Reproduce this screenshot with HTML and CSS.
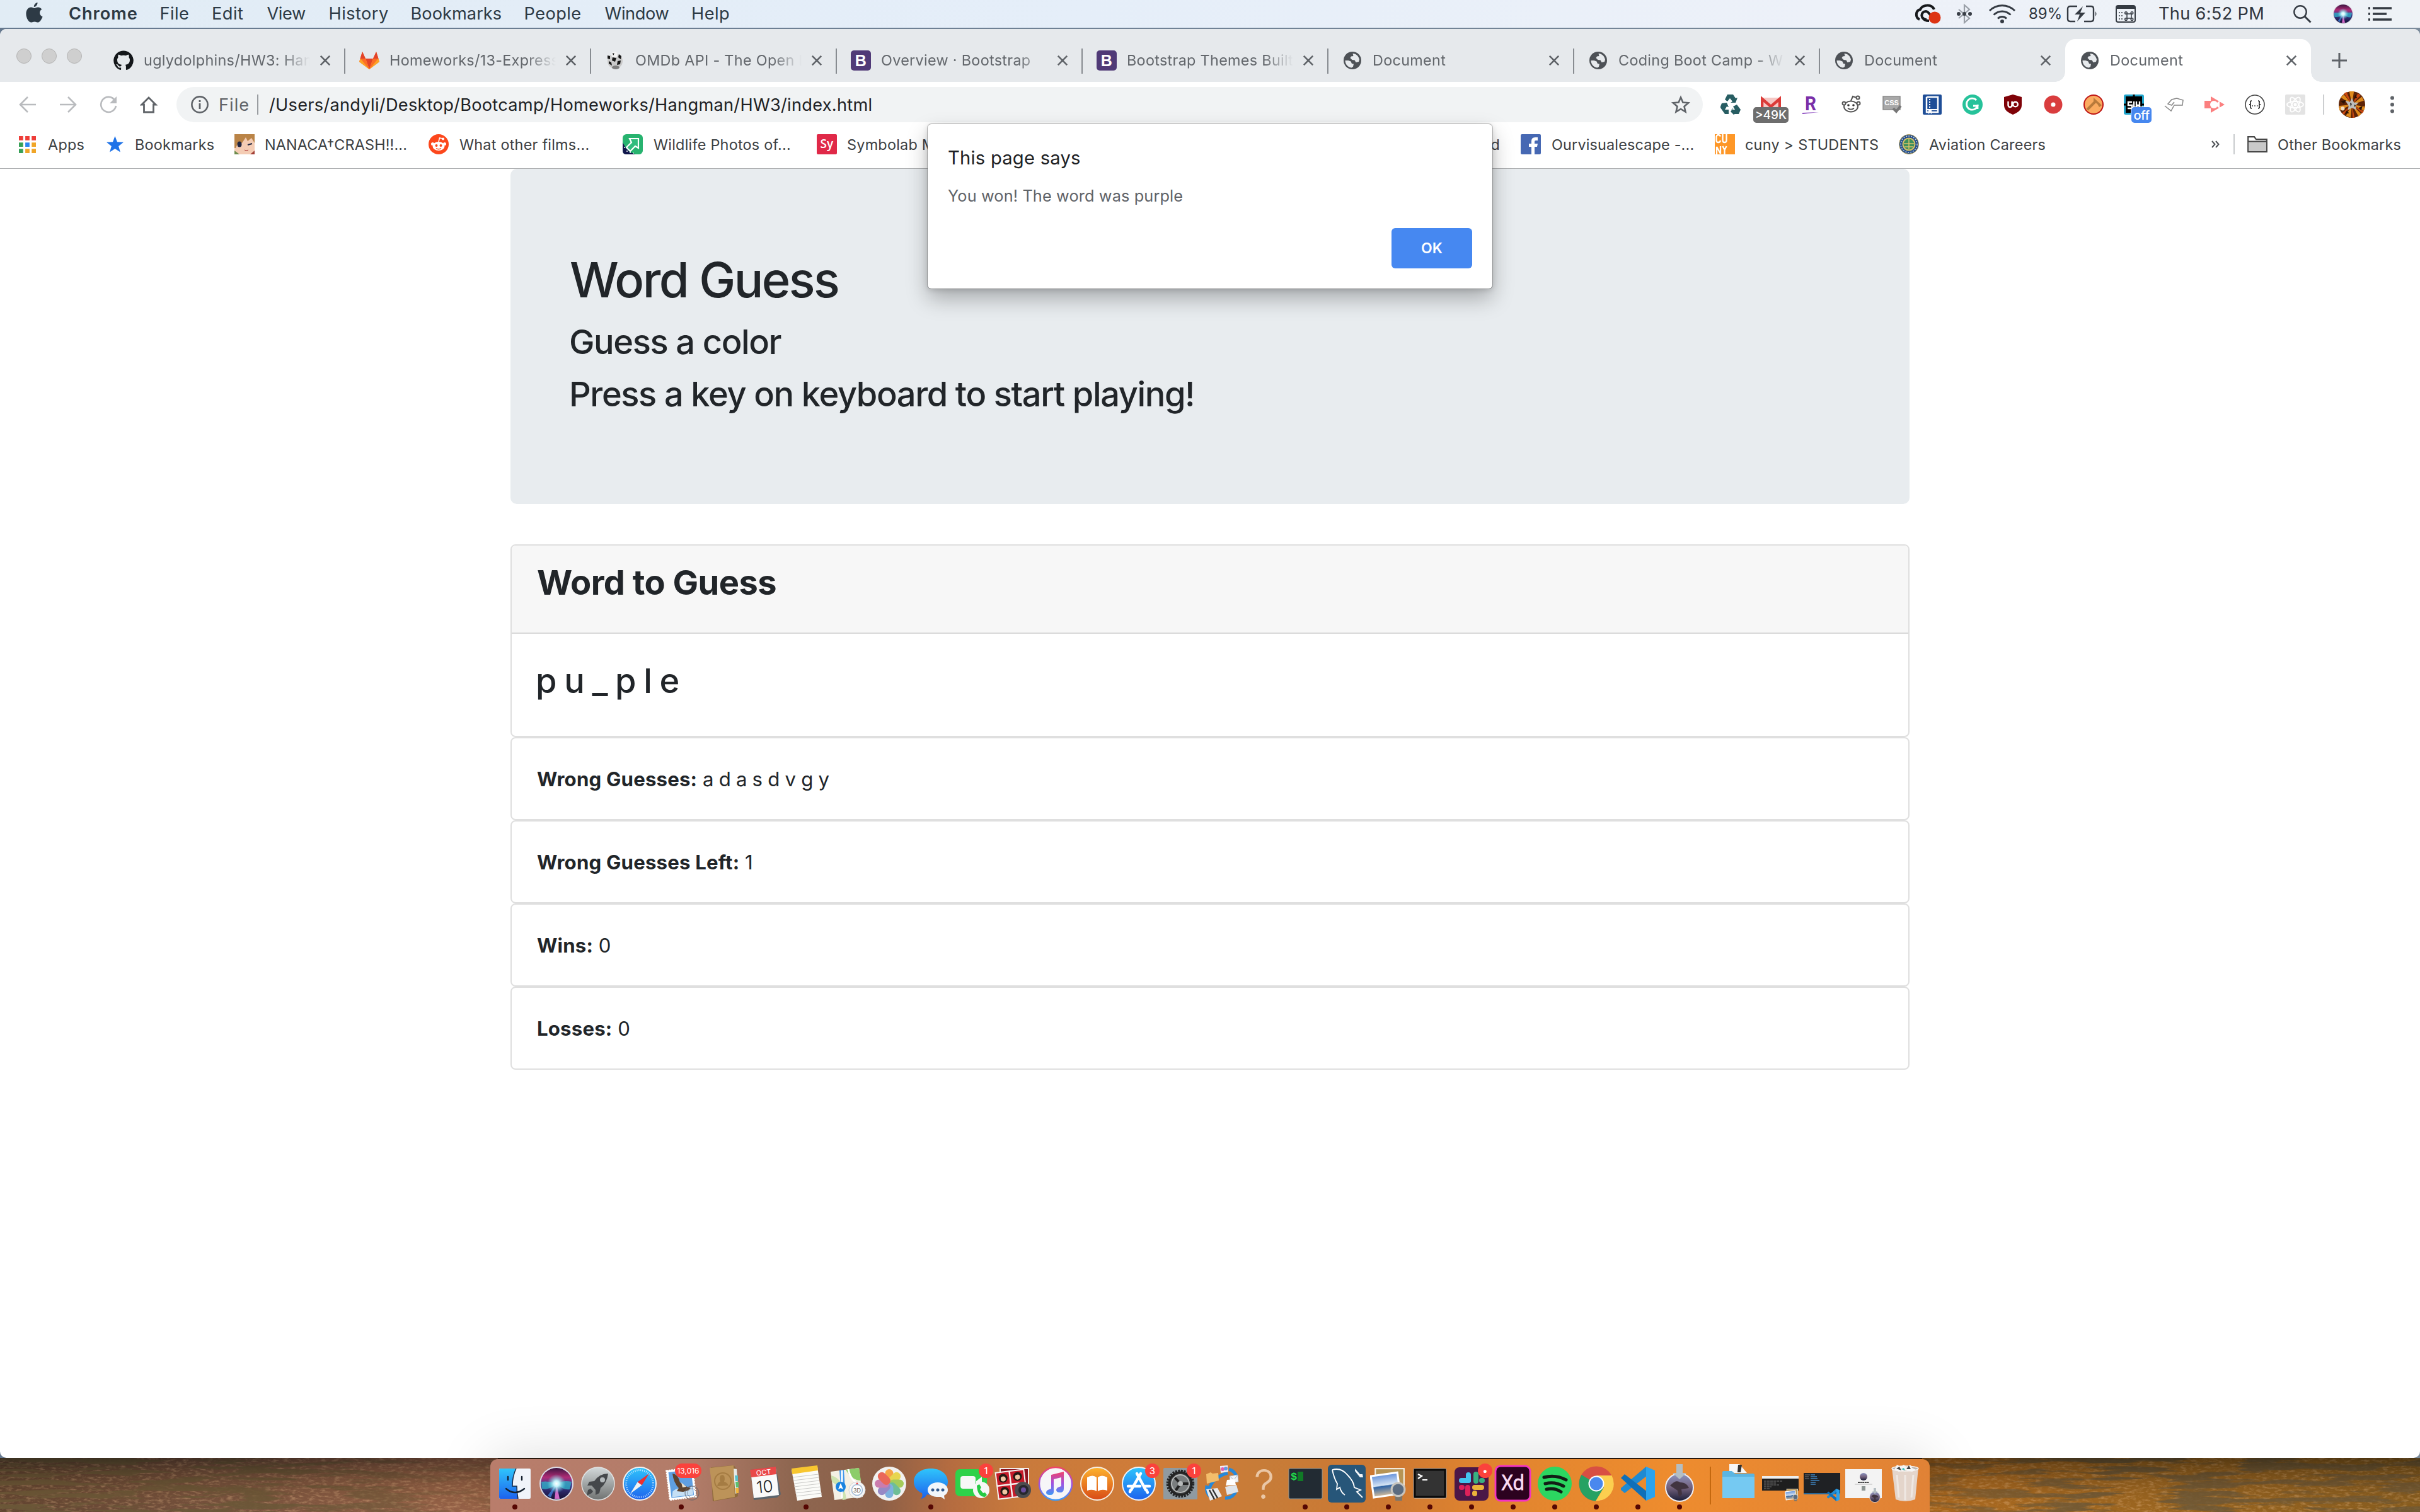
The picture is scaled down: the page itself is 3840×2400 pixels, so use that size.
FILE: index.html
```
<!DOCTYPE html>
<html lang="en">
<head>
<meta charset="utf-8">
<title>Document</title>
<link rel="stylesheet" href="styles.css">
</head>
<body>
<svg class="defs" width="0" height="0" aria-hidden="true">
  <defs>
    <symbol id="globe" viewBox="0 0 28 28"><circle cx="14" cy="14" r="14" fill="#4d5156"/><path d="M2.500 14h5l4 1.500 1.500 3.500 3 .5-1 4.500-2.500 1.500C7 25 2.500 20 2.500 14z" fill="#e7eaed"/><path d="M14.500 3c5 0 9.500 4 10.500 9.500l-1 3.500-4.500 1-2-3.500-4-.5-3-3 1.500-2.500 3.500-.5z" fill="#e7eaed"/></symbol>
    <symbol id="close" viewBox="0 0 16 16"><path d="M.8 .8l14.400 14.400M15.200 .8L.8 15.200" stroke="#5f6368" stroke-width="2.600"/></symbol>
    <symbol id="bootstrap" viewBox="0 0 32 32"><rect width="32" height="32" rx="5" fill="#503a77"/><text x="16" y="25" text-anchor="middle" font-family="Liberation Sans, sans-serif" font-weight="700" font-size="25" fill="#fff">B</text></symbol>
    <linearGradient id="blueV" x2="0" y2="1"><stop stop-color="#2fc5fb"/><stop offset="1" stop-color="#1d62ee"/></linearGradient>
    <linearGradient id="silver" x2="0" y2="1"><stop stop-color="#d3d9da"/><stop offset="1" stop-color="#6f7271"/></linearGradient>
    <linearGradient id="orangeV" x2="0" y2="1"><stop stop-color="#fdb32e"/><stop offset="1" stop-color="#d84a17"/></linearGradient>
    <linearGradient id="sea" x2="0" y2="1"><stop stop-color="#6c97dc"/><stop offset=".5" stop-color="#d5e4f3"/><stop offset=".55" stop-color="#2f64a5"/><stop offset="1" stop-color="#c9b69b"/></linearGradient>
    <linearGradient id="note" x2="0" y2="1"><stop stop-color="#f0436a"/><stop offset=".5" stop-color="#a14fe0"/><stop offset="1" stop-color="#3d9af5"/></linearGradient>
    <linearGradient id="island" x2="0" y2="1"><stop stop-color="#8b93c0"/><stop offset=".5" stop-color="#75637e"/><stop offset="1" stop-color="#191c36"/></linearGradient>
    <radialGradient id="siriCore"><stop stop-color="#fff"/><stop offset=".3" stop-color="#c4f4fa"/><stop offset="1" stop-color="#5ad7e2" stop-opacity="0"/></radialGradient>
    <linearGradient id="siriBall" x2="0" y2="1"><stop stop-color="#3a1540"/><stop offset=".3" stop-color="#b02b76"/><stop offset=".55" stop-color="#3c3a8e"/><stop offset="1" stop-color="#140f33"/></linearGradient>
    <symbol id="siriIcon" viewBox="0 0 54 54"><circle cx="27" cy="27" r="27" fill="#dcdce6"/><circle cx="27" cy="27" r="25" fill="url(#siriBall)"/><path d="M3 24q12-2 24 3-11 11-23 8zM51 24q-12-3-24 3 11 11 21 9z" fill="#2fb4c8" opacity=".75"/><path d="M27 27L24 51h8z" fill="#d069c6"/><path d="M27 27L13 46l5 3z" fill="#3f7fd8" opacity=".8"/><circle cx="27" cy="27" r="15" fill="url(#siriCore)"/></symbol>
    <symbol id="vscode" viewBox="0 0 54 54"><path d="M40 0L0 34v3l6 5L42 14z" fill="#1f8ad2"/><path d="M0 18l6-6L42 40l-2 14z" fill="#0f6fb8"/><path d="M40 0l14 6v42l-14 6z" fill="#2ba3ee"/></symbol>
    <symbol id="preview" viewBox="0 0 56 50"><rect x="8" y="1" width="44" height="30" fill="#b69455" stroke="#f5f1e6" stroke-width="2"/><g transform="rotate(-8 24 28)"><rect x="2" y="8" width="44" height="36" fill="#fff"/><rect x="5" y="11" width="38" height="30" fill="url(#sea)"/></g><path d="M37 38h13l-1 12H39z" fill="#7c766c"/><circle cx="43" cy="33" r="10" fill="#5b6c80" stroke="#c7c4bd" stroke-width="3"/></symbol>
    <symbol id="installer" viewBox="0 0 46 60"><circle cx="23" cy="37" r="22" fill="url(#island)" stroke="#efeef4" stroke-width="2"/><path d="M8 34c8-8 12-8 16-5 8 0 12 4 14 9l-12 2 1 8-5 4-2-10z" fill="#413440"/><path d="M18 0h10v14h6L23 24 12 14h6z" fill="#b4bec3"/></symbol>
    <filter id="grain" x="0" y="0" width="100%" height="100%"><feTurbulence type="fractalNoise" baseFrequency=".009 .11" numOctaves="4" seed="8"/><feColorMatrix values="0 0 0 0 .1  0 0 0 0 .08  0 0 0 0 .04  8 0 0 0 -3.700"/></filter>
    <filter id="speck" x="0" y="0" width="100%" height="100%"><feTurbulence type="fractalNoise" baseFrequency=".1 .3" numOctaves="3" seed="3"/><feColorMatrix values="0 0 0 0 .9  0 0 0 0 .6  0 0 0 0 .35  3 0 0 0 -1.400"/></filter>
    <linearGradient id="woodTone"><stop stop-color="#4e3a30"/><stop offset=".1" stop-color="#694b40"/><stop offset=".2" stop-color="#8f5e4b"/><stop offset=".5" stop-color="#6b4520"/><stop offset=".8" stop-color="#a5651b"/><stop offset=".88" stop-color="#93611c"/><stop offset="1" stop-color="#7a561a"/></linearGradient>
    <linearGradient id="woodDark"><stop stop-color="#fff"/><stop offset=".12" stop-color="#ddd"/><stop offset=".19" stop-color="#444"/><stop offset=".21" stop-color="#333"/><stop offset=".8" stop-color="#777"/><stop offset=".87" stop-color="#ddd"/><stop offset="1" stop-color="#bbb"/></linearGradient>
    <linearGradient id="woodShade" x2="0" y2="1"><stop stop-color="#150c04" stop-opacity=".45"/><stop offset="1" stop-color="#e08a3a" stop-opacity=".12"/></linearGradient>
    <mask id="woodMask"><rect width="3840" height="86" fill="url(#woodDark)"/></mask>
  </defs>
</svg>

<div class="desktop">
  <header class="menubar">
    <nav class="menus">
      <svg class="apple" viewBox="0 0 27 32"><path d="M18.500 0c.3 3.500-2.500 7-5.600 7C12.500 3.700 15.500.5 18.500 0zM13.600 9c1.500 0 3-1.600 5.700-1.600 2.600 0 4.800 1.300 6.100 3.400-5 3-4 9.800 1.200 11.700C25 27 22 31.600 19 31.600c-2 0-2.800-1.200-5.200-1.200s-3.400 1.200-5.200 1.200C4.500 31.600.4 24.500.4 18 .4 11.300 4.300 7.500 8.200 7.500c2.400 0 4.200 1.500 5.400 1.500z" fill="#2d3a45"/></svg>
      <span class="app-name">Chrome</span><span>File</span><span>Edit</span><span class="tight">View</span><span>History</span><span class="snug">Bookmarks</span><span>People</span><span class="tight">Window</span><span>Help</span>
    </nav>
    <div class="status">
      <svg width="44" height="32" viewBox="0 0 44 32"><path d="M9 25C2 22 2 11 10 9 14 1 28 0 32 9" fill="none" stroke="#17191c" stroke-width="4"/><path d="M20 25C10 25 10 12 19 12c6 0 8 12 14 12" fill="none" stroke="#17191c" stroke-width="4"/><path d="M14 22c2 4 6 5 10 5" fill="none" stroke="#17191c" stroke-width="4"/><circle cx="33" cy="22" r="9.500" fill="#dd3414"/></svg>
      <svg width="26" height="32" viewBox="0 0 26 32"><path d="M4 9l17 14-8 7V2l8 7L4 23" fill="none" stroke="#9aa0a8" stroke-width="2.200"/><circle cx="4" cy="16" r="3" fill="#3a3f47"/><circle cx="13" cy="16" r="3" fill="#3a3f47"/><circle cx="22" cy="16" r="3" fill="#3a3f47"/></svg>
      <svg width="44" height="32" viewBox="0 0 44 32"><g fill="none" stroke="#353b43" stroke-width="3"><path d="M2 11c11-11 29-11 40 0M8.500 17.500c8-7.500 19-7.500 27 0M15 23.500c4-4 10-4 14 0"/></g><circle cx="22" cy="28" r="3" fill="#353b43"/></svg>
      <span class="percent">89%</span>
      <svg width="50" height="28" viewBox="0 0 50 28"><path d="M17 2H6Q2 2 2 6v16q0 4 4 4h8M31 2h8q4 0 4 4v16q0 4-4 4H28" fill="none" stroke="#353b43" stroke-width="2.400"/><path d="M26 2L13 15h8l-4 11 13-14h-8z" fill="#353b43"/><path d="M46 10q3 4 0 8z" fill="#353b43"/></svg>
      <svg width="32" height="28" viewBox="0 0 32 28"><rect x="1" y="1" width="30" height="26" rx="3" fill="none" stroke="#353b43" stroke-width="2"/><path d="M1 1h30v5H1z" fill="#353b43"/><path d="M5 12h2M5 17h2M5 22h2M9 12h2M9 17h2M9 22h2" stroke="#353b43" stroke-width="1.500"/><g fill="none" stroke="#353b43" stroke-width="1.500"><path d="M18 14h7v7h-7z"/><circle cx="16.500" cy="12.500" r="1.800"/><circle cx="26" cy="12.500" r="1.800"/><circle cx="16.500" cy="22.500" r="1.800"/><circle cx="26" cy="22.500" r="1.800"/></g></svg>
      <span>Thu 6:52 PM</span>
      <svg width="30" height="30" viewBox="0 0 30 30"><circle cx="12" cy="12" r="9.700" fill="none" stroke="#353b43" stroke-width="2.400"/><path d="M19 19l9.500 9.500" stroke="#353b43" stroke-width="3"/></svg>
      <svg width="32" height="32"><use href="#siriIcon"/></svg>
      <svg width="38" height="22" viewBox="0 0 38 22"><path d="M8 2h30M8 11h22M8 20h30M1 2h3M1 11h3M1 20h3" stroke="#353b43" stroke-width="3.600"/></svg>
    </div>
  </header>

  <section class="window">
    <div class="tabstrip">
      <div class="lights"><i></i><i></i><i></i></div>
      <div class="tab"><svg class="fav" viewBox="0 0 32 32"><path d="M16 .5a15.700 15.700 0 0 0-5 30.600c.8.1 1.100-.3 1.100-.8v-3c-4.400 1-5.300-1.900-5.300-1.900-.7-1.800-1.700-2.300-1.700-2.300-1.400-1 .1-1 .1-1 1.600.1 2.400 1.600 2.400 1.600 1.400 2.400 3.700 1.700 4.600 1.300.1-1 .5-1.700 1-2.100-3.500-.4-7.200-1.700-7.200-7.800 0-1.700.6-3.100 1.600-4.200-.2-.4-.7-2 .2-4.200 0 0 1.300-.4 4.300 1.600a15 15 0 0 1 7.800 0c3-2 4.300-1.600 4.300-1.600.9 2.200.3 3.800.2 4.200 1 1.100 1.600 2.500 1.600 4.200 0 6.100-3.700 7.400-7.200 7.800.6.500 1.100 1.500 1.100 2.900v4.500c0 .5.300.9 1.100.8A15.700 15.700 0 0 0 16 .5z" fill="#14171a"/></svg><span class="tab-title">uglydolphins/HW3: Han</span><svg class="x"><use href="#close"/></svg></div>
      <div class="tab"><svg class="fav" viewBox="0 0 32 32"><path d="M16 30L0 18 5 2l5 11h12l5-11 5 16z" fill="#fc6d26"/><path d="M16 30L10 13h12z" fill="#e24329"/><path d="M16 30L10 13H2L0 18zM16 30l6-17h8l2 5z" fill="#fca326"/><path d="M16 30L10 13H2zM16 30l6-17h8z" fill="#fc6d26"/><path d="M10 13L5 2 1.500 13zM22 13l5-11 3.500 11z" fill="#e24329"/></svg><span class="tab-title">Homeworks/13-Express</span><svg class="x"><use href="#close"/></svg></div>
      <div class="tab"><svg class="fav" viewBox="0 0 32 32"><circle cx="16" cy="17" r="12" fill="#c9c9c9"/><circle cx="15" cy="7" r="5" fill="#f3f3f3"/><path d="M4 8l4 1v5l-4-1zM12 11l6 1-2 6-5-2zM22 6l4 3-1 5-4-3zM6 17l4 2 1 5-5-3zM20 17l5-1-1 6-5 1zM12 4l3 1-2 3z" fill="#161616"/><ellipse cx="17" cy="27" rx="6" ry="3" fill="#7d7d7d"/></svg><span class="tab-title">OMDb API - The Open M</span><svg class="x"><use href="#close"/></svg></div>
      <div class="tab"><svg class="fav"><use href="#bootstrap"/></svg><span class="tab-title">Overview · Bootstrap</span><svg class="x"><use href="#close"/></svg></div>
      <div class="tab"><svg class="fav"><use href="#bootstrap"/></svg><span class="tab-title">Bootstrap Themes Built</span><svg class="x"><use href="#close"/></svg></div>
      <div class="tab"><svg class="fav small"><use href="#globe"/></svg><span class="tab-title">Document</span><svg class="x"><use href="#close"/></svg></div>
      <div class="tab"><svg class="fav small"><use href="#globe"/></svg><span class="tab-title">Coding Boot Camp - W</span><svg class="x"><use href="#close"/></svg></div>
      <div class="tab last"><svg class="fav small"><use href="#globe"/></svg><span class="tab-title">Document</span><svg class="x"><use href="#close"/></svg></div>
      <div class="tab active"><svg class="fav small"><use href="#globe"/></svg><span class="tab-title">Document</span><svg class="x"><use href="#close"/></svg></div>
      <svg class="plus" viewBox="0 0 24 24"><path d="M12 0v24M0 12h24" stroke="#5f6368" stroke-width="3"/></svg>
    </div>

    <div class="toolbar">
      <div class="nav-buttons">
        <svg viewBox="0 0 28 28"><path d="M27 14H3M14 2L2 14l12 12" fill="none" stroke="#b9bbbe" stroke-width="2.600"/></svg>
        <svg viewBox="0 0 28 28"><path d="M1 14h24M14 2l12 12-12 12" fill="none" stroke="#b9bbbe" stroke-width="2.600"/></svg>
        <svg viewBox="0 0 28 28"><path d="M24 7a12 12 0 1 0 2 9" fill="none" stroke="#b9bbbe" stroke-width="2.600"/><path d="M27 1v11H16z" fill="#b9bbbe"/></svg>
        <svg viewBox="0 0 28 28"><path d="M14 3L3 14h3.500v12h15V14H25z" fill="none" stroke="#5f6368" stroke-width="2.800"/></svg>
      </div>
      <div class="omnibox">
        <svg class="info" viewBox="0 0 28 28"><circle cx="14" cy="14" r="12.600" fill="none" stroke="#5f6368" stroke-width="2.600"/><path d="M14 12v9M14 7v3" stroke="#5f6368" stroke-width="2.800"/></svg>
        <span class="scheme">File</span><span class="rule"></span>
        <span class="url">/Users/andyli/Desktop/Bootcamp/Homeworks/Hangman/HW3/index.html</span>
        <svg class="star" viewBox="0 0 30 30"><path d="M15 3.500l3.400 8 8.600.8-6.500 5.700 2 8.500L15 22l-7.500 4.500 2-8.500L3 12.300l8.600-.8z" fill="none" stroke="#5f6368" stroke-width="2.600"/></svg>
      </div>
      <div class="extensions">
        <svg viewBox="0 0 32 32"><g fill="#275d62"><path d="M7 8l4-8h9l4 6 3-1-3 8h-8l3-2-4-5-4 5z"/><path d="M0 19l2-5 8-1 3 7-3-1-3 5h6v7H7L0 21z"/><path d="M17 24h6l-3-5 6-3 6 8-3 7h-7v2l-6-6 5-6z"/></g></svg>
        <div class="ext"><svg viewBox="0 0 32 32"><path d="M0 5h32v22H0z" fill="#f5c8c5"/><path d="M2 27V7l14 12L30 7v20" fill="none" stroke="#dc3b38" stroke-width="4.500"/></svg><span class="badge gray">&gt;49K</span></div>
        <svg viewBox="0 0 32 32"><text x="6" y="25" font-family="Roboto, sans-serif" font-weight="700" font-size="32" textLength="18" lengthAdjust="spacingAndGlyphs" fill="#7a2fa8">R</text><path d="M2 31V29l26-1z" fill="#8540bd"/></svg>
        <svg viewBox="0 0 32 32"><g fill="#fff" stroke="#555" stroke-width="2"><ellipse cx="15" cy="19" rx="11" ry="8.500"/><circle cx="4" cy="14" r="2.500"/><circle cx="27" cy="14" r="2.500"/><path d="M15 10l3-7 6 2"/><circle cx="26" cy="5" r="2.500"/></g><circle cx="11" cy="17" r="1.800" fill="#333"/><circle cx="19" cy="17" r="1.800" fill="#333"/><path d="M10 22q5 3 10 0" stroke="#444" fill="none" stroke-width="1.500"/></svg>
        <svg viewBox="0 0 32 32"><rect x="2" y="3" width="27" height="21" fill="#a8a8a8" stroke="#8a8a8a" stroke-width="1.500"/><text x="15.500" y="17" text-anchor="middle" font-family="Liberation Sans, sans-serif" font-weight="700" font-size="11" fill="#fff">CSS</text><path d="M18 22l5 5 7-9" stroke="#777" stroke-width="4" fill="none"/></svg>
        <svg viewBox="0 0 32 32"><rect x="1" width="30" height="32" rx="2" fill="#1f4e97"/><path d="M7 4h18v24H15M7 4v24h3" fill="none" stroke="#fff" stroke-width="2.500"/><path d="M12 7v14" stroke="#fff" stroke-width="2" stroke-dasharray="2 2"/><path d="M6 24h20" stroke="#fff" stroke-width="2"/><path d="M10 25h5v6l-2.500-2-2.500 2z" fill="#fff"/></svg>
        <svg viewBox="0 0 32 32"><circle cx="16" cy="16" r="16" fill="#26c29a"/><path d="M22 9a9 9 0 1 0 2 9h-7m7-2v7" fill="none" stroke="#fff" stroke-width="2.800"/></svg>
        <svg viewBox="0 0 32 32"><path d="M16 0l14 4v13c0 8-7 12-14 15C9 29 2 25 2 17V4z" fill="#7f0208"/><path d="M8.500 11v6a3 3 0 0 0 6 0v-6M15 11v8" fill="none" stroke="#fff" stroke-width="2.400"/><circle cx="20" cy="15.500" r="3.800" fill="none" stroke="#fff" stroke-width="2.400"/></svg>
        <svg viewBox="0 0 32 32"><circle cx="16" cy="16" r="14.500" fill="#d93d3e"/><circle cx="16" cy="16" r="3.500" fill="#fff"/></svg>
        <svg viewBox="0 0 32 32"><circle cx="16" cy="16" r="15" fill="#fbab60" stroke="#be1414" stroke-width="2"/><path d="M6 24L19 11" stroke="#b97a3b" stroke-width="4"/><path d="M16 5l13 12-4 3-3-5-6-4z" fill="#b97a3b"/></svg>
        <div class="ext"><svg viewBox="0 0 32 32"><rect width="32" height="32" rx="3" fill="#20a5cc"/><rect x="3" y="3" width="26" height="26" fill="#000"/><path d="M16 0v4M0 16h4M28 16h4" stroke="#000" stroke-width="3"/><path d="M13 12H7v5h6v5H6M16 11v11M20 11v11M20 17h5M25 11v11" stroke="#fff" stroke-width="2.400" fill="none"/></svg><span class="badge blue">off</span></div>
        <svg viewBox="0 0 32 32"><path d="M1 18l10 8 5-9 13 0 1-8-10-3-8 2-6 7 6 2 4-5" fill="none" stroke="#888" stroke-width="1.500"/></svg>
        <svg viewBox="0 0 32 32"><path d="M0 10h10V3l22 13L10 29v-7H0z" fill="#fb8080"/><circle cx="15" cy="16" r="6" fill="#fff"/><path d="M15 13h5l4-3v12l-4-3h-5z" fill="#fff"/></svg>
        <svg viewBox="0 0 32 32"><circle cx="16" cy="16" r="15" fill="#fff" stroke="#444" stroke-width="1.600"/><path d="M11 10q-3 0-2 3t-2 3q3 0 2 3t2 3M21 10q3 0 2 3t2 3q-3 0-2 3t-2 3" fill="none" stroke="#222" stroke-width="1.600"/><path d="M11.500 18h1.500M15.200 18h1.500M19 18h1.500" stroke="#222" stroke-width="1.600"/></svg>
        <svg viewBox="0 0 32 32"><rect width="32" height="32" rx="2" fill="#e3e3e3"/><g fill="none" stroke="#fff" stroke-width="1.800"><ellipse cx="16" cy="16" rx="13" ry="5"/><ellipse cx="16" cy="16" rx="13" ry="5" transform="rotate(60 16 16)"/><ellipse cx="16" cy="16" rx="13" ry="5" transform="rotate(120 16 16)"/></g><circle cx="16" cy="16" r="2.500" fill="#fff"/></svg>
      </div>
      <span class="rule ext-rule"></span>
      <svg class="avatar" viewBox="0 0 40 40"><circle cx="20" cy="20" r="20" fill="#5e2407"/><path d="M20 20L3 9l5-4zM20 20L16 0h7zM20 20l15-12 3 6zM20 20L1 22v7zM20 20l-9 17 7 3zM20 20l10 18 4-4zM20 20l20 3-2 6z" fill="#df8a1b"/><path d="M20 20L8 3l4-2zM20 20l9-17 4 3zM20 20L5 33l3 2zM20 20l4 20-3 0zM20 20l18 10-2 3z" fill="#c9470f"/><path d="M3 15l8-2-3 6zM25 5l3 5-5 1zM30 25l6-3-2 7zM12 29l4 4-7 1z" fill="#2a1206"/><path d="M10 14l7 2 3-6 3 7 7 0-5 5 2 6-7-3-6 3 1-6z" fill="#bdbdbb"/><path d="M17 17l3 2-2 4zM23 20l3 1-2 3z" fill="#333"/><circle cx="6" cy="26" r="3" fill="#f4dfc2"/></svg>
      <svg class="kebab" viewBox="0 0 6 28"><circle cx="3" cy="3.500" r="3" fill="#5f6368"/><circle cx="3" cy="14" r="3" fill="#5f6368"/><circle cx="3" cy="24.500" r="3" fill="#5f6368"/></svg>
    </div>

    <div class="bookmarks">
      <svg class="apps" viewBox="0 0 28 28"><path d="M0 0h7v7H0zM10.500 0h7v7h-7zM21 0h7v7h-7z" fill="#ee3d38"/><path d="M0 10.500h7v7H0zM0 21h7v7H0z" fill="#37a057"/><path d="M10.500 10.500h7v7h-7z" fill="#2c85f0"/><path d="M21 10.500h7v7h-7zM10.500 21h7v7h-7zM21 21h7v7h-7z" fill="#f0a527"/></svg><span>Apps</span>
      <svg class="bm-star" viewBox="0 0 28 28"><path d="M14 0l3.600 9.600 10.400.5-8.100 6.400 2.800 10L14 20.800l-8.700 5.700 2.800-10L0 10.100l10.400-.5z" fill="#1f73e8"/></svg><span>Bookmarks</span>
      <svg viewBox="0 0 32 32"><path d="M0 0h32v32H0z" fill="#f4ccb4"/><path d="M0 0h32v14l-5-8-6 5-3-6-6 9-6-1-4 9H0z" fill="#ba8447"/><ellipse cx="8" cy="16" rx="3.500" ry="4.500" fill="#232741"/><path d="M21 17l7-2" stroke="#232741" stroke-width="2"/><path d="M16 25q3 2 6 0" stroke="#a33" fill="none"/><path d="M0 26l8 6H0z" fill="#6d8c4c"/><path d="M32 26l-7 6h7z" fill="#a23e35"/></svg><span class="wide-caps">NANACA†CRASH!!...</span>
      <svg viewBox="0 0 32 32"><circle cx="16" cy="16" r="16" fill="#fc471c"/><ellipse cx="16" cy="19" rx="9.500" ry="7" fill="#fff"/><circle cx="6.500" cy="15.500" r="2.500" fill="#fff"/><circle cx="25.500" cy="15.500" r="2.500" fill="#fff"/><path d="M16 12l1.500-6 5 1" stroke="#fff" stroke-width="1.600" fill="none"/><circle cx="23" cy="7.500" r="2" fill="#fff"/><circle cx="12.500" cy="18" r="2" fill="#fc471c"/><circle cx="19.500" cy="18" r="2" fill="#fc471c"/><path d="M12 22.500q4 2.500 8 0" stroke="#fc471c" fill="none" stroke-width="1.300"/></svg><span class="films">What other films...</span>
      <svg viewBox="0 0 32 32"><rect width="32" height="32" rx="6" fill="#27b36f"/><path d="M11 7h14v15l-5-3-8 8-6-6 8-8z" fill="#32bd7d" stroke="#fff" stroke-width="2.200"/><path d="M0 13l5 9 6 6 9 4H6q-6 0-6-6z" fill="#11164c"/><path d="M3 20v2M7 26v2M12 28v2M17 30h1" stroke="#fff" stroke-width="1.500"/></svg><span class="wildlife">Wildlife Photos of...</span>
      <svg viewBox="0 0 32 32"><rect width="32" height="32" rx="2" fill="#e02948"/><text x="16" y="22" text-anchor="middle" font-family="Open Sans, sans-serif" font-size="19" font-weight="600" fill="#fff">Sy</text></svg><span>Symbolab M</span>
      <span class="hidden-end">d</span>
      <svg viewBox="0 0 32 32"><rect width="32" height="32" rx="2" fill="#4668b3"/><path d="M17 32V20h-4v-5h4v-4q0-6 6-6h4v5h-3q-2 0-2 2v3h5l-1 5h-4v12z" fill="#fff"/></svg><span class="visual">Ourvisualescape -...</span>
      <svg viewBox="0 0 32 32"><path d="M0 0h32v32H0z" fill="#fe9727"/><path d="M9 3.500Q8 1 5.500 1T2.500 4v6q0 3 3 3t3.500-3M12.500 0v10q0 3 3 3t3-3V0M3 32V20l6 11V19M12.500 19l3 6 3-6M15.500 25v7" fill="none" stroke="#fff" stroke-width="2.300"/></svg><span class="cuny">cuny &gt; STUDENTS</span>
      <svg viewBox="0 0 32 32"><circle cx="16" cy="16" r="15.500" fill="#244e8b" stroke="#b7a15c"/><circle cx="16" cy="16" r="10.500" fill="#d8c069"/><circle cx="16" cy="16" r="8.500" fill="#3d8f5b"/><path d="M8 15h16M16 8v16M9 20h14" stroke="#d8c069" stroke-width="1.500"/><circle cx="16" cy="16" r="13" fill="none" stroke="#c7cfd9" stroke-width="1.500" stroke-dasharray="2 2"/></svg><span class="aviation">Aviation Careers</span>
      <svg class="chevrons" viewBox="0 0 13 12"><path d="M1 1l4.500 5L1 11M7 1l4.500 5L7 11" fill="none" stroke="#4b4f54" stroke-width="2"/></svg>
      <span class="rule bm-rule"></span>
      <svg class="folder" viewBox="0 0 32 26"><path d="M1.200 24.800V1.200H11l3 4h16.800v19.600z" fill="#fff" stroke="#454545" stroke-width="2.200"/><path d="M2.200 8.500h27.600v15.200H2.200z" fill="#c9c9c9"/><path d="M2 8.500h28" stroke="#454545" stroke-width="2"/></svg><span>Other Bookmarks</span>
    </div>

    <main class="page">
      <div class="jumbotron">
        <h1>Word Guess</h1>
        <h3>Guess a color</h3>
        <h3>Press a key on keyboard to start playing!</h3>
      </div>
      <div class="card">
        <div class="card-header"><h3>Word to Guess</h3></div>
        <div class="card-body"><h3>p u _ p l e</h3></div>
      </div>
      <div class="card line"><b>Wrong Guesses:</b> <span>a d a s d v g y</span></div>
      <div class="card line"><b>Wrong Guesses Left:</b> 1</div>
      <div class="card line"><b>Wins:</b> 0</div>
      <div class="card line"><b>Losses:</b> 0</div>
    </main>
  </section>

  <div class="dialog" role="dialog">
    <p class="dialog-title">This page says</p>
    <p class="dialog-text">You won! The word was purple</p>
    <button>OK</button>
  </div>

  <svg class="wallpaper" viewBox="0 0 3840 86">
    <rect width="3840" height="86" fill="url(#woodTone)"/>
    <rect width="3840" height="86" filter="url(#speck)" opacity=".35"/>
    <g mask="url(#woodMask)"><rect width="3840" height="86" filter="url(#grain)"/></g>
    <rect width="3840" height="86" fill="url(#woodShade)"/>
    <rect x="790" width="2260" height="6" fill="#2b1a0e"/>
  </svg>

  <footer class="dock">
    <div class="slot on"><svg viewBox="0 0 66 84"><rect x="8" y="15" width="50" height="48" rx="2" fill="#f0f4fa"/><path d="M8 17q0-2 2-2h25q-6 12-6 28h7q0 10 2 20H10q-2 0-2-2z" fill="url(#blueV)"/><path d="M35 15q-6 12-6 28h7q0 10 2 20" fill="none" stroke="#1a2c48" stroke-width="1.500"/><path d="M22 28v5M44 28v5M19 47q14 12 29 0" stroke="#14202e" stroke-width="2.400" fill="none" stroke-linecap="round"/></svg></div>
    <div class="slot"><svg viewBox="0 0 66 84"><use href="#siriIcon" x="6" y="12" width="54" height="54"/></svg></div>
    <div class="slot"><svg viewBox="0 0 66 84"><circle cx="33" cy="39" r="26" fill="url(#silver)" stroke="#e0e2e2" stroke-width="1.500"/><path d="M49 23q-14 0-22 12l-8 1-3 6 7 0 6 7v8l6-3 2-8q10-8 12-23zM21 47l-4 2-2 9 8-4 2-3z" fill="#45484b"/><circle cx="40" cy="33" r="4" fill="#b4babc"/></svg></div>
    <div class="slot"><svg viewBox="0 0 66 84"><circle cx="33" cy="39" r="26" fill="url(#blueV)" stroke="#f2f2f2" stroke-width="2"/><circle cx="33" cy="39" r="21.500" fill="none" stroke="#cfeaff" stroke-width="3" stroke-dasharray="1 2"/><path d="M48 23L29.500 36.500l7 5z" fill="#ee2f2f"/><path d="M18 55l11.500-18.500 7 5z" fill="#f2f2f2"/></svg></div>
    <div class="slot on"><svg viewBox="0 0 66 84"><g transform="rotate(-7 30 40)"><rect x="12" y="16" width="42" height="47" fill="#fff" stroke="#fff" stroke-width="2" stroke-dasharray="2.500 1.500"/><rect x="15" y="19" width="36" height="41" fill="#5f9fe2"/><path d="M18 50q8-6 14-2t18-3v14H16z" fill="#c5dff5"/></g><path d="M19 23q9 1 12 14l9 6 8 3-5 4-7 2-10-1 3-5q-8-8-10-23z" fill="#5d4330"/><path d="M33 37l8 7-6 1z" fill="#eadfcb"/><circle cx="50" cy="54" r="11" fill="none" stroke="#62626a" stroke-width="1.300" opacity=".65"/><circle cx="50" cy="54" r="7" fill="none" stroke="#62626a" opacity=".65"/></svg><b class="count wide">13,016</b></div>
    <div class="slot"><svg viewBox="0 0 66 84"><path d="M14 13l36-3 3 3 4 46-5 2-35 6z" fill="#8f6b3b"/><path d="M49 15l6 1 3 37-5 2z" fill="#e5ebe9"/><path d="M52 26h5v9h-4z" fill="#57bfc9"/><path d="M53 36h5v9h-4z" fill="#5dc270"/><path d="M53 46h5v8h-4z" fill="#f0b63e"/><path d="M12 14l38-4 2 50-33 6z" fill="#bc9359"/><circle cx="33" cy="35" r="13" fill="none" stroke="#a57c43" stroke-width="2"/><path d="M24 43q1-6 5-7-3-10 3-11 6 1 3 11 5 1 7 6z" fill="#a57c43"/></svg></div>
    <div class="slot"><svg viewBox="0 0 66 84"><path d="M11 17l40-5 8 44-6 5-37 4z" fill="#5b656d"/><path d="M11 18l40-4 5 43-40 5z" fill="#fafafa"/><path d="M10 17l41-5 1 12-40 5z" fill="#e94848"/><text x="32" y="25" text-anchor="middle" font-family="Inter, sans-serif" font-size="11" fill="#fff" transform="rotate(-6 32 25)">OCT</text><text x="34" y="53" text-anchor="middle" font-family="Inter, sans-serif" font-weight="300" font-size="26" fill="#222" transform="rotate(-6 34 50)">10</text></svg></div>
    <div class="slot on"><svg viewBox="0 0 66 84"><path d="M10 17l41-5 7 48-39 6z" fill="#fbfbf8"/><path d="M12 29l41-5M13 34l41-5M14 39l40-5M14 44l41-5M15 49l41-5M16 54l41-5M17 59l41-5" stroke="#c9c9c7"/><path d="M10 15l41-5 1 8-41 6z" fill="#f8c62f"/></svg></div>
    <div class="slot"><svg viewBox="0 0 66 84"><path d="M6 20l45-6 6 46-45 5z" fill="#f4f0e4"/><path d="M30 17l21-3 3 20q-14 0-24-17z" fill="#8ccd6a"/><path d="M7 26q20 5 24 38l-6 1-4-20-13-9z" fill="#cde3b0"/><path d="M20 18l7-1 2 30-6 12z" fill="#3d95ea"/><path d="M34 16q4 20 21 26M24 18v44" stroke="#fff" stroke-width="3" fill="none"/><circle cx="22" cy="44" r="8" fill="#1883e0"/><path d="M22 38l4 10-4-2-4 2z" fill="#fff"/><circle cx="48" cy="49" r="13" fill="#f6f6f6" stroke="#d2d2d2"/><circle cx="48" cy="49" r="8.500" fill="#fff" stroke="#9bb6d2" stroke-width="1.500"/><text x="48" y="52.500" text-anchor="middle" font-family="Inter, sans-serif" font-size="9" fill="#555">3D</text><path d="M46 40h4l-2-3z" fill="#e33"/></svg></div>
    <div class="slot"><svg viewBox="0 0 66 84"><circle cx="33" cy="39" r="27" fill="#f1f1f0"/><g opacity=".88"><rect x="26.500" y="16" width="13" height="23" rx="6.500" fill="#f79a2f"/><rect x="26.500" y="16" width="13" height="23" rx="6.500" fill="#e6d33a" transform="rotate(45 33 39)"/><rect x="26.500" y="16" width="13" height="23" rx="6.500" fill="#9bc746" transform="rotate(90 33 39)"/><rect x="26.500" y="16" width="13" height="23" rx="6.500" fill="#5db88b" transform="rotate(135 33 39)"/><rect x="26.500" y="16" width="13" height="23" rx="6.500" fill="#6fa9dc" transform="rotate(180 33 39)"/><rect x="26.500" y="16" width="13" height="23" rx="6.500" fill="#8b7bc0" transform="rotate(225 33 39)"/><rect x="26.500" y="16" width="13" height="23" rx="6.500" fill="#c66da6" transform="rotate(270 33 39)"/><rect x="26.500" y="16" width="13" height="23" rx="6.500" fill="#ea5445" transform="rotate(315 33 39)"/></g></svg></div>
    <div class="slot on"><svg viewBox="0 0 66 84"><path d="M33 15c16 0 27 9 27 21S49 57 33 57l-6-1q-3 6-10 7 4-4 2-9C11 51 6 44 6 36c0-12 11-21 27-21z" fill="url(#blueV)"/><path d="M44 37c9 0 16 5 16 12 0 4-2 7-6 9l1 6-6-4q-20 1-21-11c0-7 7-12 16-12z" fill="#f2f6fa"/><circle cx="36" cy="49" r="2.500" fill="#31588c"/><circle cx="44" cy="49" r="2.500" fill="#31588c"/><circle cx="52" cy="49" r="2.500" fill="#31588c"/></svg></div>
    <div class="slot"><svg viewBox="0 0 66 84"><rect x="6" y="16" width="50" height="43" rx="7" fill="#2ed24a"/><rect x="14" y="27" width="24" height="20" rx="4" fill="#f7f7f7"/><path d="M39 35l9-7v18l-9-5z" fill="#f7f7f7"/><circle cx="47" cy="49" r="13" fill="#f6f6f6"/><path d="M40 42l4-2 3 5-2 3 5 6 3-1 3 4-3 3q-12 0-13-18z" fill="#25c943"/></svg><b class="count">1</b></div>
    <div class="slot"><svg viewBox="0 0 66 84"><path d="M11 15h45v34H11z" fill="#8c1521" stroke="#f0ecea" stroke-width="2"/><g transform="rotate(-7 28 40)"><path d="M6 19h45v42H6z" fill="#c51a29" stroke="#f4f1ee" stroke-width="2"/><path d="M28 19v42M6 40h45" stroke="#f4f1ee" stroke-width="2.500"/><g fill="#241813"><circle cx="17" cy="29" r="7"/><circle cx="40" cy="29" r="7"/><circle cx="17" cy="50" r="7"/></g><g fill="#f0c5a3"><circle cx="17" cy="30" r="4"/><circle cx="40" cy="30" r="4"/><circle cx="17" cy="51" r="4"/></g></g><circle cx="47" cy="49" r="13" fill="#4c4c4e"/><circle cx="48" cy="49" r="8" fill="#26282c"/><circle cx="48" cy="49" r="4" fill="#6a4e9e"/></svg></div>
    <div class="slot"><svg viewBox="0 0 66 84"><circle cx="33" cy="39" r="26" fill="#f6f6f8" stroke="url(#note)" stroke-width="2.500"/><path d="M26 25l20-5v27q0 6-6 6t-6-4 8-6V29l-12 3v20q0 5-6 5t-6-4 8-6z" fill="url(#note)"/></svg></div>
    <div class="slot"><svg viewBox="0 0 66 84"><circle cx="33" cy="39" r="26" fill="url(#orangeV)" stroke="#f6efe4" stroke-width="2"/><path d="M17 29q9-5 15 0v22q-6-4-15-1zM34 29q6-5 15 0v21q-9-3-15 1z" fill="#fff"/></svg></div>
    <div class="slot"><svg viewBox="0 0 66 84"><circle cx="33" cy="39" r="26" fill="url(#blueV)" stroke="#f0f3f8" stroke-width="2"/><path d="M30 23l14 26M36 23L21 49M16 43h19M41 43h9M19 52l1-3M45 49l2 4" stroke="#fff" stroke-width="4.500" stroke-linecap="round"/></svg><b class="count">3</b></div>
    <div class="slot"><svg viewBox="0 0 66 84"><rect x="6" y="14" width="54" height="50" rx="2" fill="#909aa0"/><circle cx="33" cy="39" r="20" fill="none" stroke="#242628" stroke-width="4.500" stroke-dasharray="3 1.500"/><circle cx="33" cy="39" r="18" fill="#37393a" stroke="#222" stroke-width="3"/><circle cx="33" cy="39" r="14" fill="#797d7e"/><path d="M33 39L22 27M33 39h16M33 39L24 52" stroke="#222" stroke-width="4"/><circle cx="33" cy="39" r="14" fill="none" stroke="#b7baba" stroke-width="2"/><circle cx="33" cy="39" r="4" fill="#b7baba"/></svg><b class="count">1</b></div>
    <div class="slot"><svg viewBox="0 0 66 84"><path d="M44 16q10 3 13 14M9 42q-2 12 6 18M38 62q14 0 18-14M12 50q4-20 30-28" fill="none" stroke="#2689db" stroke-width="5"/><path d="M8 24l7-3 3 2 9-1 1 12-19 5z" fill="#f3bd6a"/><path d="M30 11l12-1 1 10-12 2z" fill="#f4eef8"/><circle cx="34" cy="16" r="3" fill="#e261b2"/><circle cx="39" cy="15" r="3" fill="#659be4"/><path d="M45 27l13-2 1 11-13 2z" fill="#f1f3f6" stroke="#a9b4c3"/><path d="M45 27l7 6 6-8" fill="none" stroke="#a9b4c3"/><path d="M8 48l18-2 7 13-19 7z" fill="#e9ebed"/><path d="M13 49l8 15M18 48l8 14" stroke="#333" stroke-width="2.500"/><path d="M38 44l18-3 3 11-18 5z" fill="#dfe4ea"/><path d="M39 42l2-9 12-1 2 9z" fill="#fff"/></svg></div>
    <div class="slot"><svg viewBox="0 0 66 84"><text x="34" y="63" text-anchor="middle" font-family="Inter, sans-serif" font-weight="300" font-size="65" fill="#eed0b2" opacity=".9">?</text></svg></div>
    <div class="slot on"><svg viewBox="0 0 66 84"><rect x="7" y="15" width="53" height="48" rx="2" fill="#222b33" stroke="#8b9699"/><text x="10" y="33" font-family="Liberation Mono, monospace" font-weight="700" font-size="17" fill="#1fe04a">$</text><path d="M21 20h9v15h-9z" fill="#107a26"/></svg></div>
    <div class="slot on"><svg viewBox="0 0 66 84"><rect x="3" y="9" width="60" height="60" rx="6" fill="#275679"/><path d="M10 17q14-4 24 8 10 10 11 20l10 4-6 3 9 9M10 17q3 14 8 22l-1 9 5-3q2 8 8 12" fill="none" stroke="#fff" stroke-width="1.800"/><path d="M46 15l8 9 4 0 1 5-5 0-8-10z" fill="#f1f5f8"/></svg></div>
    <div class="slot on"><svg viewBox="0 0 66 84"><use href="#preview" x="4" y="14" width="58" height="52"/></svg></div>
    <div class="slot on"><svg viewBox="0 0 66 84"><rect x="7" y="15" width="52" height="47" rx="2" fill="#333" stroke="#bbb"/><rect x="9" y="17" width="48" height="43" fill="none" stroke="#090909" stroke-width="3"/><path d="M14 24l6 3-6 4M21 33h8" fill="none" stroke="#fff" stroke-width="2.200"/></svg></div>
    <div class="slot on"><svg viewBox="0 0 66 84"><rect x="6" y="13" width="54" height="53" rx="8" fill="#4b1747"/><g stroke-width="8" stroke-linecap="round"><path d="M28 25v9" stroke="#44c3ee"/><path d="M17 34h11" stroke="#44c3ee"/><path d="M40 24v11" stroke="#37b181"/><path d="M49 34h1" stroke="#37b181"/><path d="M38 45h11" stroke="#ecb33a"/><path d="M38 54v1" stroke="#ecb33a"/><path d="M27 45v10" stroke="#de215a"/><path d="M17 45h1" stroke="#de215a"/></g></svg><b class="count">•</b></div>
    <div class="slot on"><svg viewBox="0 0 66 84"><rect x="5" y="11" width="55" height="55" rx="8" fill="#2c021f" stroke="#f433c2" stroke-width="2.800"/><text x="33" y="49" text-anchor="middle" font-family="Open Sans, sans-serif" font-size="32" fill="#fbdcf3" stroke="#fbdcf3" textLength="36" lengthAdjust="spacingAndGlyphs">Xd</text></svg></div>
    <div class="slot on"><svg viewBox="0 0 66 84"><circle cx="33" cy="39" r="27" fill="#2cd661"/><path d="M16 29q18-5 35 4M18 39q15-4 29 4M20 48q12-3 23 4" fill="none" stroke="#121d16" stroke-width="5" stroke-linecap="round"/></svg></div>
    <div class="slot on"><svg viewBox="0 0 66 84"><circle cx="33" cy="39" r="27.500" fill="#d84f43"/><path d="M9.500 25A27.500 27.500 0 0 0 32 66.500L45 45 33 39z" fill="#26a263"/><path d="M33 26h24.500A27.500 27.500 0 0 1 32 66.500L45 45z" fill="#fccf4f"/><circle cx="33" cy="39" r="12.500" fill="#fff"/><circle cx="33" cy="39" r="10.500" fill="#4988ee"/></svg></div>
    <div class="slot on"><svg viewBox="0 0 66 84"><use href="#vscode" x="6" y="12" width="54" height="54"/></svg></div>
    <div class="slot on"><svg viewBox="0 0 66 84"><use href="#installer" x="10" y="8" width="46" height="60"/></svg></div>
    <div class="divider"></div>
    <div class="slot"><svg viewBox="0 0 66 84"><path d="M18 8h16l12 14H18z" fill="#f7f7f7"/><path d="M32 9l6 0-2 12h-5z" fill="#333"/><path d="M7 21q0-2 2-2h13l5 4h29q2 0 2 2v36H7z" fill="#5bb5e2"/><path d="M7 28h51v34H7z" fill="#75c9f2"/></svg></div>
    <div class="slot"><svg viewBox="0 0 66 84"><rect x="4" y="27" width="58" height="23" fill="#1e1e1e"/><path d="M4 27h58v4H4z" fill="#eee"/><path d="M7 35h30M7 38h20M7 41h24M7 44h12M7 47h10" stroke="#777" stroke-dasharray="4 1"/><use href="#preview" x="40" y="47" width="22" height="20"/></svg></div>
    <div class="slot"><svg viewBox="0 0 66 84"><rect x="4" y="22" width="58" height="34" fill="#1f2124"/><path d="M6 25h8M6 28h6M6 31h7" stroke="#777"/><path d="M15 25h7M15 28h10M15 31h11M15 34h14M15 37h8M15 40h8" stroke="#3f83bd" stroke-width="1.500"/><path d="M4 55h58" stroke="#2a7fc0" stroke-width="1.500"/><use href="#vscode" x="41" y="47" width="20" height="20"/></svg></div>
    <div class="slot"><svg viewBox="0 0 66 84"><rect x="4" y="16" width="58" height="46" fill="#f3f3f3"/><circle cx="33" cy="28" r="6" fill="url(#island)"/><path d="M24 37h18" stroke="#444" stroke-width="2" stroke-dasharray="3 .6"/><path d="M19 40h28" stroke="#bbb"/><rect x="30" y="43" width="6" height="7" fill="#8c9492"/><use href="#installer" x="42" y="46" width="18" height="23"/></svg></div>
    <div class="slot"><svg viewBox="0 0 66 84"><path d="M12 14l42 0-5 50q-16 6-31 0z" fill="#e4dedb" opacity=".9"/><ellipse cx="33" cy="15" rx="21" ry="4" fill="#bdb4ae" stroke="#f6f4f2" stroke-width="1.500"/><path d="M16 17l4-8 6 3 5-3 4 4 6-4 3 5 6 3-6 3-12-3-9 3z" fill="#f6f6f6"/><path d="M19 15l5-3 3 6zM35 16l4-6 3 6z" fill="#444"/><path d="M27 16l4-2 2 4z" fill="#3bbfb7"/><path d="M20 25l3 36M33 25v40M46 25l-3 36" stroke="#f7f5f3" stroke-width="3" opacity=".6"/></svg></div>
  </footer>
</div>
</body>
</html>
```
FILE: styles.css
```
* { box-sizing: border-box; }
body { margin: 0; font-family: Inter, "Liberation Sans", sans-serif; }
svg { display: block; flex: none; }
.defs { position: absolute; }

.desktop {
  position: relative;
  width: 3840px;
  height: 2400px;
  overflow: hidden;
  display: flex;
  flex-direction: column;
  background: linear-gradient(90deg, #66798f, #7b8b9b);
}

/* macOS menu bar */
.menubar {
  height: 44px;
  flex: none;
  display: flex;
  justify-content: space-between;
  align-items: center;
  background: linear-gradient(90deg, #e1ecf5, #e5eef9 45%, #edf1f9 75%, #eef2f6);
  color: #2d3a45;
  font-size: 27.2px;
  line-height: 44px;
  white-space: nowrap;
}
.menus {
  display: grid;
  grid-template-columns: 68px 144.5px 82.5px 87.5px 98px 130px 180px 128px 137.5px 80px;
  align-items: center;
  padding-left: 41px;
  letter-spacing: .45px;
}
.apple { width: 27px; height: 32px; margin-top: -4px; }
.app-name { font-weight: 600; letter-spacing: .95px; }
.tight { letter-spacing: -.4px; }
.snug { letter-spacing: .04px; }
.status {
  display: grid;
  grid-template-columns: 67px 51px 64px 60px 78px 68px 213px 64px 55px 83px;
  align-items: center;
  color: #30363e;
  letter-spacing: .3px;
}
.percent { font-size: 24px; letter-spacing: 0; }

/* browser window */
.window {
  height: 2268px;
  margin-top: 2px;
  flex: none;
  display: flex;
  flex-direction: column;
  border-radius: 10px;
  background: #fff;
  overflow: hidden;
  position: relative;
  z-index: 1;
}
.tabstrip {
  height: 84px;
  flex: none;
  display: flex;
  align-items: flex-end;
  background: #e6e9ec;
}
.lights {
  width: 157px;
  height: 84px;
  display: flex;
  gap: 16px;
  padding: 31px 0 0 26px;
}
.lights i {
  width: 24px;
  height: 24px;
  border-radius: 50%;
  background: #cfcfcf;
  border: 1px solid #b5b5b5;
}
.tab {
  position: relative;
  width: 390px;
  height: 68px;
  flex: none;
  display: flex;
  align-items: center;
  padding-left: 23px;
  color: #63676c;
  font-size: 23.4px;
  letter-spacing: .3px;
}
.tab:not(.active):not(.last)::after {
  content: "";
  position: absolute;
  right: -1px;
  top: 15px;
  width: 2px;
  height: 40px;
  background: #888c91;
}
.tab-title {
  width: 264px;
  margin-left: 16px;
  white-space: nowrap;
  overflow: hidden;
  line-height: 36px;
  -webkit-mask-image: linear-gradient(90deg, #000 218px, transparent 264px);
  mask-image: linear-gradient(90deg, #000 218px, transparent 264px);
}
.fav { width: 32px; height: 32px; }
.fav.small { width: 28px; height: 28px; margin: 0 2px; }
.x { width: 16px; height: 16px; margin-left: 16px; }
.active {
  background: #fff;
  border-radius: 16px 16px 0 0;
}
.active::before, .active::after {
  content: "";
  position: absolute;
  bottom: 0;
  width: 16px;
  height: 16px;
}
.active::before { left: -16px; background: radial-gradient(circle at 0 0, transparent 15.5px, #fff 16px); }
.active::after { right: -16px; background: radial-gradient(circle at 100% 0, transparent 15.5px, #fff 16px); }
.plus { width: 24px; height: 24px; margin: 0 0 22px 33px; }

.toolbar {
  height: 72px;
  flex: none;
  display: flex;
  align-items: center;
}
.nav-buttons { display: flex; gap: 36px; padding-left: 30px; width: 280px; }
.nav-buttons svg { width: 28px; height: 28px; }
.omnibox {
  width: 2422px;
  height: 56px;
  border-radius: 28px;
  background: #f1f3f4;
  display: flex;
  align-items: center;
  padding: 0 20px 0 23px;
  font-size: 27.2px;
  white-space: nowrap;
}
.info { width: 28px; height: 28px; }
.scheme { margin-left: 16px; width: 61px; color: #5f6368; letter-spacing: 1px; }
.rule { width: 2px; height: 32px; background: #9a9da1; }
.url { flex: 1; margin-left: 17px; color: #202124; letter-spacing: .27px; }
.star { width: 30px; height: 30px; }
.extensions { display: flex; gap: 32px; margin-left: 28px; }
.extensions svg { width: 32px; height: 32px; }
.ext { position: relative; width: 32px; }
.badge {
  position: absolute;
  top: 20px;
  border-radius: 5px;
  color: #fff;
  text-align: center;
  font-size: 19px;
  font-weight: 500;
  height: 25px;
  line-height: 26px;
}
.gray { left: -12px; width: 56px; background: #6d6d6d; }
.blue { right: -12px; width: 32px; background: #4687ef; box-shadow: 0 0 0 1px #fff; font-size: 20px; letter-spacing: -.5px; }
.ext-rule { margin-left: 28px; background: #ccced0; }
.avatar { width: 42px; height: 42px; margin-left: 23px; }
.kebab { width: 6px; height: 28px; margin-left: 40px; }

.bookmarks {
  height: 66px;
  flex: none;
  display: flex;
  align-items: center;
  padding: 0 0 11px 30px;
  border-bottom: 1px solid #adafb1;
  color: #3c4043;
  font-size: 23.4px;
  letter-spacing: .24px;
  white-space: nowrap;
}
.bookmarks svg { width: 32px; height: 32px; }
.bookmarks > span { margin-left: 16px; margin-right: 33px; }
.bookmarks .apps { width: 27px; height: 27px; }
.bookmarks .apps + span { width: 59px; margin-left: 19px; margin-right: 34px; }
.bookmarks .bm-star { width: 27px; height: 27px; }
.bookmarks .bm-star + span { width: 126px; margin-left: 18px; margin-right: 32px; }
.bookmarks .wide-caps { width: 227px; margin-left: 16px; margin-right: 33px; letter-spacing: .15px; }
.bookmarks .films { width: 207px; margin-left: 17px; margin-right: 52px; }
.bookmarks .wildlife { width: 218px; margin-left: 17px; margin-right: 41px; }
.bookmarks .hidden-end { margin: 0 33px 0 auto; }
.bookmarks .visual { width: 226px; margin-left: 17px; margin-right: 33px; letter-spacing: .17px; }
.bookmarks .cuny { width: 213px; margin-left: 16px; margin-right: 31px; }
.bookmarks .aviation { width: 186px; margin-right: 33px; }
.bookmarks .chevrons { width: 13px; height: 12px; margin-left: 229px; }
.bookmarks .bm-rule { margin: 0 20px 0 22px; background: #c9cbcd; }
.bookmarks .folder { width: 32px; height: 26px; }
.bookmarks .folder + span { width: 197px; margin-right: 29px; }

/* page content */
.page {
  width: 2220px;
  margin: 0 auto;
  color: #212529;
}
h1, h3 { margin: 0 0 16px; font-weight: 500; }
h1 { font-size: 77.6px; line-height: 97px; letter-spacing: -2.55px; }
h3 { font-size: 54.2px; line-height: 67.2px; letter-spacing: -1.4px; }
.jumbotron {
  height: 532px;
  padding: 128px 93px;
  margin-bottom: 64px;
  border-radius: 10px;
  background: #e8ecef;
}
.jumbotron h1 { text-indent: 1px; }
.card { border: 2px solid #dfdfdf; border-radius: 8px; }
.card-header {
  height: 140px;
  padding: 25px 40px 0;
  border-bottom: 2px solid #d9d9d9;
  background: #f7f7f7;
  border-radius: 6px 6px 0 0;
}
.card-header h3 { font-weight: 700; letter-spacing: -.55px; }
.card-body { height: 162px; padding: 41px 38px 0; }
.line { height: 132px; padding: 41px 40px 0; font-size: 31.2px; line-height: 48px; }
.line b { letter-spacing: .18px; }
.line span { letter-spacing: -.3px; }

/* alert */
.dialog {
  position: absolute;
  z-index: 2;
  left: 1472px;
  top: 197px;
  width: 896px;
  height: 261px;
  padding: 32px;
  border-radius: 6px;
  background: #fff;
  display: flex;
  flex-direction: column;
  box-shadow: 0 0 0 1px rgba(0,0,0,.25), 0 16px 34px rgba(0,0,0,.28), 0 2px 10px rgba(0,0,0,.15);
}
.dialog p { margin: 0; }
.dialog-title { font-size: 29.2px; line-height: 44px; letter-spacing: .22px; color: #202124; }
.dialog-text { font-size: 25.3px; line-height: 36px; letter-spacing: .13px; color: #5f6368; }
.dialog p.dialog-text { margin-top: 20px; }
.dialog button {
  margin-top: auto;
  align-self: flex-end;
  width: 128px;
  height: 64px;
  border: 0;
  border-radius: 6px;
  background: #4688f1;
  color: #fff;
  font: 600 23px Inter, sans-serif;
}

/* wallpaper strip and dock */
.wallpaper { position: absolute; left: 0; top: 2314px; width: 3840px; height: 86px; }
.wallpaper { z-index: 0; }
.dock {
  position: relative;
  z-index: 3;
  width: 2284px;
  height: 84px;
  margin: 2px auto 0;
  padding: 0 4px 0 6px;
  display: flex;
  border-radius: 12px 12px 0 0;
  box-shadow: 0 0 90px rgba(0,0,0,.15);
  background: linear-gradient(90deg, #b97d6b 0, #b27c69 14%, #8e6650 21%, #8c6048 27%, #b56c40 32%, #c97a3c 37%, #d07c38 46%, #c77c38 54%, #cd7832 62%, #e0842f 69%, #ee8c2e 82%, #e08236 100%);
}
.slot { position: relative; width: 66px; height: 84px; flex: none; }
.slot svg { width: 66px; height: 84px; }
.on::after {
  content: "";
  position: absolute;
  left: 29px;
  top: 72px;
  width: 8px;
  height: 8px;
  border-radius: 50%;
  background: #560703;
}
.count {
  position: absolute;
  top: 7px;
  right: 0;
  width: 23px;
  height: 23px;
  border-radius: 12px;
  background: #fb423c;
  color: #fff;
  font-size: 15px;
  font-weight: 400;
  line-height: 23px;
  text-align: center;
}
.count.wide { width: 42px; left: 23px; font-size: 12px; }
.divider { width: 2px; height: 60px; margin: 12px 11px 0 15px; background: #c4680f; }
```
